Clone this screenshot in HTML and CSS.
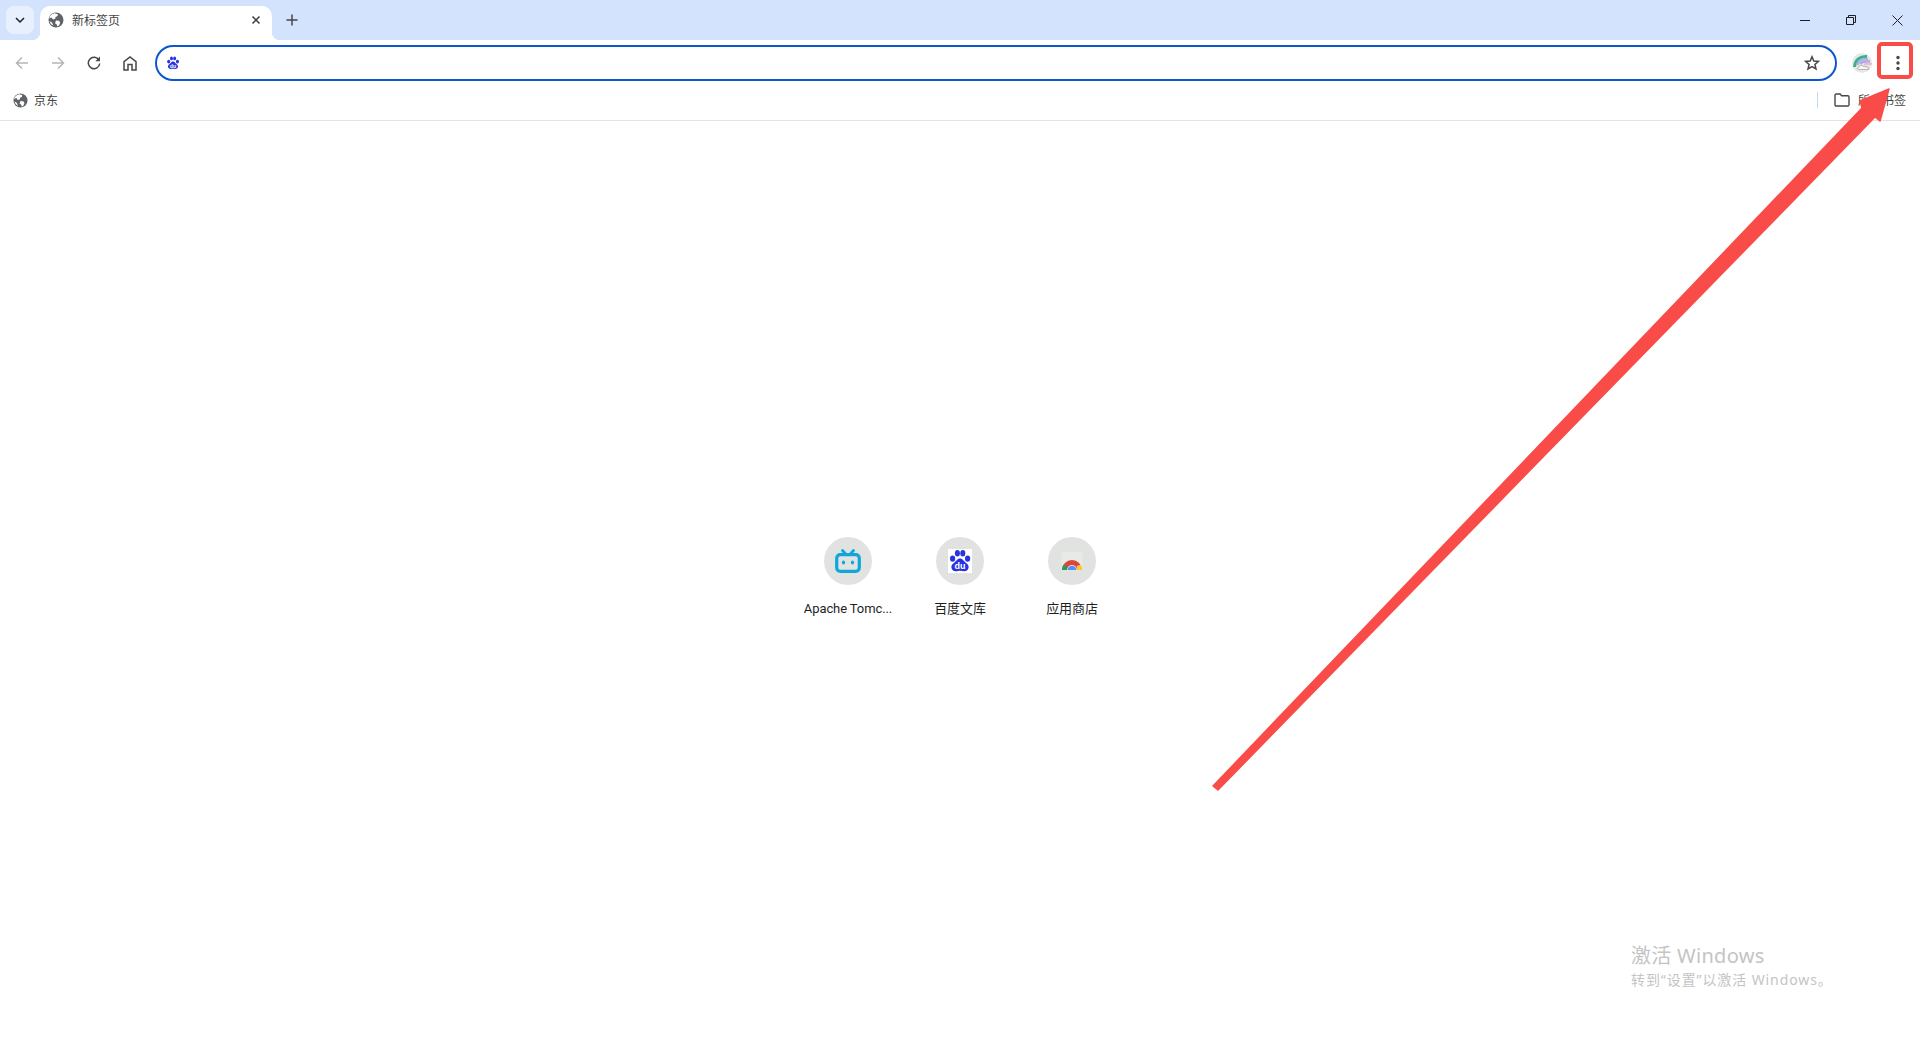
FILE: index.html
```html
<!DOCTYPE html>
<html lang="zh-CN">

<head>
    <meta charset="UTF-8">
    <title>新标签页</title>
    <link rel="stylesheet" href="styles.css">
</head>

<body>
    <svg class="sprite" width="0" height="0">
        <symbol id="globe" viewBox="0 0 16 16">
            <circle cx="8" cy="8" r="7.5" fill="#5f6368" />
            <path d="M6.500 1.200 9.800 2.200 9.600 4 7.600 5 7.200 6.800 5 7.400 3.600 5.400 1.200 6.400A7 7 0 0 1 6.500 1.200ZM8 8.400l3 .4 1.200 1.800-1 2.600-1.800 1.400-.6-2.200L7 11.200ZM1.400 9 4 10.400l1.400 3.400A7 7 0 0 1 1.400 9Z" fill="#fff" />
        </symbol>
    </svg>

    <header class="tabstrip">
        <button class="tab-search">
            <svg width="12" height="12" viewBox="0 0 12 12"><path d="M2 4l4 4 4-4" fill="none" stroke="#1f1f1f" stroke-width="1.500" /></svg>
        </button>
        <div class="tab">
            <svg class="tab-favicon" width="16" height="16"><use href="#globe" /></svg>
            <span class="tab-title">新标签页</span>
            <svg class="tab-close" width="10" height="10" viewBox="0 0 10 10"><path d="M1.500 1.500l7 7M8.500 1.500l-7 7" stroke="#3c3c3c" stroke-width="1.500" /></svg>
        </div>
        <button class="new-tab">
            <svg width="12" height="12" viewBox="0 0 12 12"><path d="M6 .5v11M.5 6h11" stroke="#474747" stroke-width="1.500" /></svg>
        </button>
        <div class="window-controls">
            <button class="win-btn"><svg width="10" height="10" viewBox="0 0 10 10"><path d="M0 5.500h10" stroke="#1f1f1f" /></svg></button>
            <button class="win-btn"><svg width="10" height="10" viewBox="0 0 10 10"><path d="M.5 2.500h7v7h-7ZM2.500 2.500v-2h7v7h-2" fill="none" stroke="#1f1f1f" /></svg></button>
            <button class="win-btn"><svg width="11" height="11" viewBox="0 0 11 11"><path d="M.5.5l10 10M10.500.5l-10 10" stroke="#1f1f1f" /></svg></button>
        </div>
    </header>

    <div class="toolbar">
        <button class="tool-btn">
            <svg width="14" height="14" viewBox="0 0 14 14"><path d="M13 7H2M7 1.500 1.500 7 7 12.500" fill="none" stroke="#b4b6b8" stroke-width="1.500" /></svg>
        </button>
        <button class="tool-btn">
            <svg width="14" height="14" viewBox="0 0 14 14"><path d="M1 7h11M7 1.500 12.500 7 7 12.500" fill="none" stroke="#b4b6b8" stroke-width="1.500" /></svg>
        </button>
        <button class="tool-btn">
            <svg width="14" height="14" viewBox="0 0 14 14"><path d="M12 4.200A5.700 5.700 0 1 0 12.700 7.500" fill="none" stroke="#474747" stroke-width="1.500" /><path d="M13 .6v4.700H8.300Z" fill="#474747" /></svg>
        </button>
        <button class="tool-btn">
            <svg width="14" height="15" viewBox="0 0 14 15"><path d="M1 14V5.700L7 1l6 4.700V14H9V8.500H5V14Z" fill="none" stroke="#474747" stroke-width="1.500" /></svg>
        </button>
        <div class="omnibox">
            <svg width="14" height="14" viewBox="0 0 24 24">
                <g fill="#2932e1">
                    <ellipse cx="4.600" cy="9.600" rx="2.600" ry="3.200" />
                    <ellipse cx="9.400" cy="4.200" rx="2.500" ry="3.200" />
                    <ellipse cx="14.800" cy="4.200" rx="2.500" ry="3.200" />
                    <ellipse cx="19.600" cy="9.600" rx="2.600" ry="3.200" />
                    <path d="M12 9.600c2.800 0 3.600 2.600 5.800 4.200 1.800 1.300 3 2.600 2.800 4.800-.3 2.500-2.200 3.900-4.700 3.700-1.500-.1-2.500-.5-3.900-.5s-2.400.4-3.900.5c-2.500.2-4.400-1.200-4.700-3.700-.2-2.200 1-3.500 2.800-4.800 2.200-1.600 3-4.200 5.800-4.200Z" />
                </g>
                <text x="12" y="20.400" class="paw-du">du</text>
            </svg>
            <svg class="star" width="16" height="16" viewBox="0 0 16 16"><path d="M8 1.800l1.800 4.200 4.600.4-3.500 3 1.100 4.500L8 11.500l-4 2.400 1.100-4.500-3.500-3 4.600-.4Z" fill="none" stroke="#474747" stroke-width="1.500" /></svg>
        </div>
        <div class="avatar">
            <svg width="20" height="20" viewBox="0 0 20 20">
                <defs><clipPath id="avatar-clip"><circle cx="10" cy="10" r="10" /></clipPath></defs>
                <g clip-path="url(#avatar-clip)" fill="none">
                    <rect width="20" height="20" fill="#e6e7e6" />
                    <path d="M2.500 14C3 7 8 3 15 3.500" stroke="#3fae8c" stroke-width="3" />
                    <path d="M5.500 12C6 8 10 5.500 16 6" stroke="#9db8e8" stroke-width="2.600" />
                    <path d="M8.500 11C9.500 9 13 8 18 8.500" stroke="#b7a3de" stroke-width="2.400" />
                    <path d="M12 11.500c2-1 4-1 8-.5" stroke="#e6b9cf" stroke-width="2" />
                    <path d="M5 15.500l4-3.500 3 1.500 4 .5 1 2.500H7Z" fill="#f7f6f2" stroke="#a09d96" stroke-width=".7" />
                </g>
            </svg>
        </div>
        <button class="tool-btn menu-btn">
            <svg width="4" height="16" viewBox="0 0 4 16"><circle cx="2" cy="2.500" r="1.700" fill="#474747" /><circle cx="2" cy="8" r="1.700" fill="#474747" /><circle cx="2" cy="13.500" r="1.700" fill="#474747" /></svg>
        </button>
    </div>

    <div class="bookmarks">
        <div class="bookmark">
            <svg width="15" height="15"><use href="#globe" /></svg>
            <span>京东</span>
        </div>
        <div class="bookmarks-right">
            <div class="divider"></div>
            <svg width="16" height="14" viewBox="0 0 16 14"><path d="M1 2.200c0-.6.500-1.200 1.200-1.200h3.900l1.500 1.700h6.200c.7 0 1.200.5 1.200 1.200v7.900c0 .7-.5 1.200-1.200 1.200H2.200c-.7 0-1.200-.5-1.200-1.200Z" fill="none" stroke="#474747" stroke-width="1.400" /></svg>
            <span>所有书签</span>
        </div>
    </div>

    <main class="ntp">
        <div class="tiles">
            <div class="tile">
                <div class="tile-icon">
                    <svg width="26" height="24" viewBox="0 0 26 24">
                        <path d="M7.500 1.500 11 5.500M18.500 1.500 15 5.500" stroke="#0fa6de" stroke-width="2.800" stroke-linecap="round" />
                        <rect x="1.700" y="5.700" width="22.600" height="16.600" rx="3.500" fill="none" stroke="#0fa6de" stroke-width="3.200" />
                        <ellipse cx="8.500" cy="13.500" rx="1.600" ry="2" fill="#0fa6de" />
                        <ellipse cx="17.500" cy="13.500" rx="1.600" ry="2" fill="#0fa6de" />
                    </svg>
                </div>
                <span class="tile-label">Apache Tomc...</span>
            </div>
            <div class="tile">
                <div class="tile-icon">
                    <svg width="24" height="24" viewBox="0 0 24 24">
                        <rect width="24" height="24" fill="#fff" />
                        <g fill="#2932e1">
                            <ellipse cx="4.600" cy="9.600" rx="2.600" ry="3.200" />
                            <ellipse cx="9.400" cy="4.200" rx="2.500" ry="3.200" />
                            <ellipse cx="14.800" cy="4.200" rx="2.500" ry="3.200" />
                            <ellipse cx="19.600" cy="9.600" rx="2.600" ry="3.200" />
                            <path d="M12 9.600c2.800 0 3.600 2.600 5.800 4.200 1.800 1.300 3 2.600 2.800 4.800-.3 2.500-2.200 3.900-4.700 3.700-1.500-.1-2.500-.5-3.900-.5s-2.400.4-3.900.5c-2.500.2-4.400-1.200-4.700-3.700-.2-2.200 1-3.500 2.800-4.800 2.200-1.600 3-4.200 5.800-4.200Z" />
                        </g>
                        <text x="12" y="20.400" class="paw-du">du</text>
                    </svg>
                </div>
                <span class="tile-label">百度文库</span>
            </div>
            <div class="tile">
                <div class="tile-icon">
                    <svg width="24" height="24" viewBox="0 0 24 24">
                        <rect x="1.500" y="3" width="21" height="18" fill="#e9e9e8" />
                        <path d="M2 21a10 10 0 0 1 20 0h-5a5 5 0 0 0-10 0Z" fill="#d9483b" />
                        <path d="M2 21a10 10 0 0 1 1.600-5.400l4 2.600A5 5 0 0 0 7 21Z" fill="#2a9d55" />
                        <path d="M16.500 17l4.300-1.300A10 10 0 0 1 22 21h-5a5 5 0 0 0-.5-4Z" fill="#fbcb38" />
                        <path d="M7.700 21a4.300 4.300 0 0 1 8.600 0Z" fill="#5c8df6" />
                    </svg>
                </div>
                <span class="tile-label">应用商店</span>
            </div>
        </div>
    </main>

    <div class="watermark">
        <div class="watermark-title">激活 Windows</div>
        <div class="watermark-sub">转到“设置”以激活 Windows。</div>
    </div>

    <!-- red annotation drawn on the screenshot -->
    <svg class="annotation" width="1920" height="1040" viewBox="0 0 1920 1040">
        <rect x="1879" y="44" width="32" height="33" rx="3" fill="none" stroke="#f94c48" stroke-width="4" />
        <polygon points="1213,786 1862,108 1860,101 1889,89 1880,121 1875,117 1218,790" fill="#f94c48" stroke="#f94c48" stroke-width="1.500" stroke-linejoin="round" />
    </svg>
</body>

</html>
```

FILE: styles.css
```css
* {
    box-sizing: border-box;
}

html,
body {
    margin: 0;
    height: 1040px;
    overflow: hidden;
}

body {
    font-family: "Noto Sans", "Noto Sans CJK SC", sans-serif;
    font-size: 12px;
    background: #fff;
    color: #1f1f1f;
    display: flex;
    flex-direction: column;
    position: relative;
}

button {
    border: 0;
    padding: 0;
    background: none;
    display: flex;
    align-items: center;
    justify-content: center;
}

.sprite {
    position: absolute;
}

.paw-du {
    font-family: "Liberation Sans", sans-serif;
    font-size: 9px;
    font-weight: bold;
    fill: #fff;
    text-anchor: middle;
}

/* Tab strip */
.tabstrip {
    height: 40px;
    background: #d3e3fd;
    display: flex;
    align-items: flex-start;
    padding: 6px 0 0 6px;
}

.tab-search {
    width: 28px;
    height: 28px;
    border-radius: 8px;
    background: #e9f0fd;
    margin-right: 6px;
}

.tab {
    width: 232px;
    height: 34px;
    background: #fff;
    border-radius: 10px 10px 0 0;
    display: flex;
    align-items: center;
    padding: 0 11px 6px 8px;
    position: relative;
}

.tab::before,
.tab::after {
    content: "";
    position: absolute;
    bottom: 0;
    width: 8px;
    height: 8px;
}

.tab::before {
    left: -8px;
    background: radial-gradient(circle at 0 0, transparent 8px, #fff 8.500px);
}

.tab::after {
    right: -8px;
    background: radial-gradient(circle at 100% 0, transparent 8px, #fff 8.500px);
}

.tab-title {
    margin-left: 8px;
    color: #444;
    flex: 1;
}

.new-tab {
    width: 28px;
    height: 28px;
    margin-left: 6px;
}

.window-controls {
    margin-left: auto;
    margin-top: -6px;
    display: flex;
}

.win-btn {
    width: 46px;
    height: 40px;
}

/* Toolbar */
.toolbar {
    height: 40px;
    background: #fff;
    border-radius: 10px 0 0 0;
    display: flex;
    align-items: flex-start;
    padding: 5px 4px 0;
}

.tool-btn {
    width: 36px;
    height: 36px;
    flex: none;
}

.omnibox {
    flex: 1;
    height: 36px;
    margin-left: 7px;
    border: 2px solid #0b57d0;
    border-radius: 18px;
    display: flex;
    align-items: center;
    justify-content: space-between;
    padding: 0 15px 0 9px;
}

.avatar {
    width: 36px;
    height: 36px;
    margin-left: 7px;
    display: flex;
    align-items: center;
    justify-content: center;
    flex: none;
}

/* Bookmarks bar */
.bookmarks {
    height: 41px;
    border-bottom: 1px solid #e3e3e3;
    display: flex;
    align-items: center;
    justify-content: space-between;
    padding: 0 14px 0 13px;
    color: #444;
}

.bookmark {
    display: flex;
    align-items: center;
    gap: 6px;
}

.bookmarks-right {
    display: flex;
    align-items: center;
    gap: 8px;
}

.divider {
    width: 1px;
    height: 16px;
    background: #c7d9f5;
    margin-right: 8px;
}

/* New tab page */
.ntp {
    flex: 1;
    display: flex;
    justify-content: center;
    padding-top: 416px;
}

.tiles {
    display: flex;
}

.tile {
    width: 112px;
    display: flex;
    flex-direction: column;
    align-items: center;
}

.tile-icon {
    width: 48px;
    height: 48px;
    border-radius: 50%;
    background: #e1e3e1;
    display: flex;
    align-items: center;
    justify-content: center;
}

.tile-label {
    margin-top: 14px;
    font-family: Roboto, "Noto Sans CJK SC", sans-serif;
    font-size: 13px;
    line-height: 20px;
    letter-spacing: -0.1px;
    color: #1f1f1f;
}

/* Overlays */
.watermark {
    position: absolute;
    left: 1631px;
    top: 942px;
    color: #c4c4c4;
}

.watermark-title {
    font-size: 20px;
    line-height: 28px;
    letter-spacing: 0.3px;
}

.watermark-sub {
    font-size: 14px;
    line-height: 20px;
    letter-spacing: 0.9px;
}

.annotation {
    position: absolute;
    left: 0;
    top: 0;
    pointer-events: none;
}
```
